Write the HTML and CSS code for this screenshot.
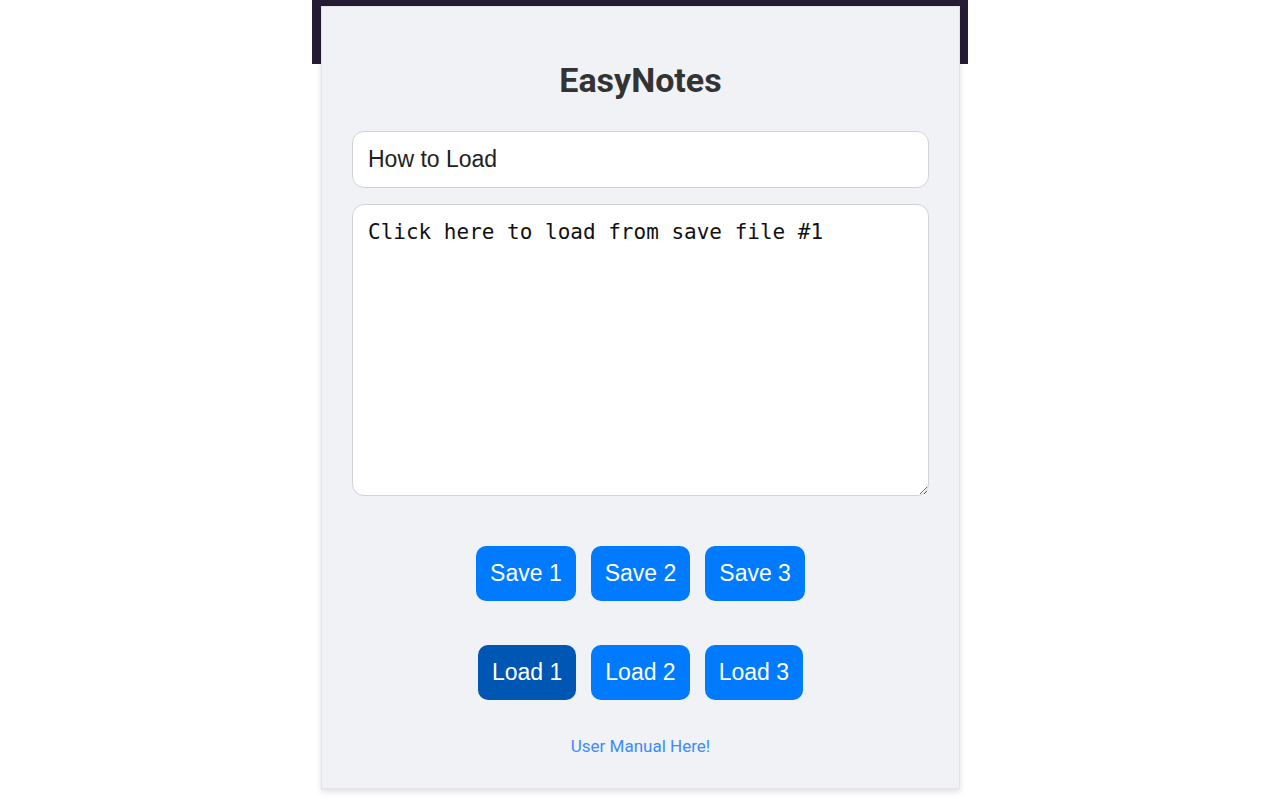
FILE: index.html
```html
<!DOCTYPE html>
<html>
<head>
<meta charset="utf-8">
<link rel="stylesheet" href="styles.css">
</head>
<body>
<div class="backdrop"></div>
<div class="popup">
  <h1 class="title">EasyNotes</h1>
  <input class="note-title" type="text" value="How to Load">
  <textarea class="note-body">Click here to load from save file #1</textarea>
  <div class="btn-row save-row">
    <button class="btn">Save 1</button>
    <button class="btn">Save 2</button>
    <button class="btn">Save 3</button>
  </div>
  <div class="btn-row load-row">
    <button class="btn active">Load 1</button>
    <button class="btn">Load 2</button>
    <button class="btn">Load 3</button>
  </div>
  <a class="manual" href="#">User Manual Here!</a>
</div>
</body>
</html>
```

FILE: styles.css
```css
html, body {
  margin: 0;
  padding: 0;
  background: #ffffff;
  height: 800px;
  overflow: hidden;
}
.backdrop {
  position: absolute;
  left: 312px;
  top: 0;
  width: 656px;
  height: 64px;
  background: #251b34;
}
.popup {
  position: relative;
  margin: 6px 0 0 321px;
  width: 577px;
  padding: 0 30px;
  height: 781px;
  background: #f0f2f5;
  border: 1px solid #e2e4e8;
  box-shadow: 0 3px 6px rgba(0, 0, 0, 0.12);
  display: flex;
  flex-direction: column;
  align-items: stretch;
  font-family: Roboto, "Liberation Sans", sans-serif;
}
.title {
  margin: 56px 0 0;
  height: 35px;
  line-height: 35px;
  font-size: 34px;
  font-weight: 700;
  text-align: center;
  color: #333333;
}
.note-title {
  margin-top: 33px;
  box-sizing: border-box;
  height: 57px;
  width: 577px;
  padding: 0 15px;
  border: 1px solid #cfd2d6;
  border-radius: 12px;
  background: #ffffff;
  font-family: "Liberation Sans", Arial, sans-serif;
  font-size: 23px;
  color: #222222;
  outline: none;
}
.note-body {
  margin-top: 16px;
  box-sizing: border-box;
  height: 292px;
  width: 577px;
  padding: 15px 15px;
  border: 1px solid #cfd2d6;
  border-radius: 12px;
  background: #ffffff;
  font-family: "DejaVu Sans Mono", "Liberation Mono", monospace;
  font-size: 21px;
  color: #111111;
  resize: both;
  outline: none;
}
.btn-row {
  display: flex;
  justify-content: center;
  gap: 15px;
}
.save-row {
  margin-top: 50px;
}
.load-row {
  margin-top: 44px;
}
.btn {
  height: 55px;
  padding: 0 14px;
  border: none;
  border-radius: 10px;
  background: #007bff;
  color: #ffffff;
  font-family: "Liberation Sans", Arial, sans-serif;
  font-size: 23px;
  cursor: pointer;
}
.btn.active {
  background: #0056b3;
}
.manual {
  margin-top: 36px;
  align-self: center;
  font-size: 17px;
  color: #3d8bfd;
  text-decoration: none;
}
```
